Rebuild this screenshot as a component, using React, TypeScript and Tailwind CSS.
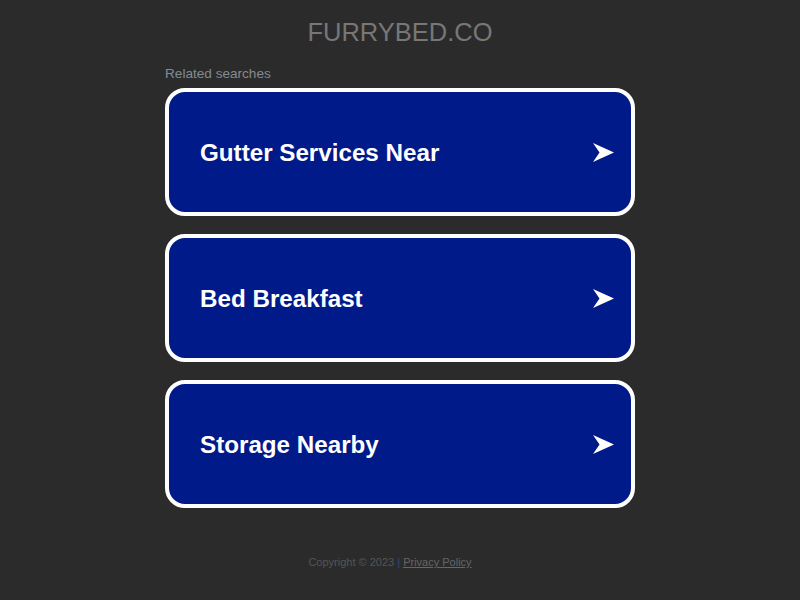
const searches = ['Gutter Services Near', 'Bed Breakfast', 'Storage Nearby'];

function Arrow() {
  return (
    <svg width="21" height="19" viewBox="0 0 21 19" className="shrink-0">
      <path d="M0 0 L21 9.5 L0 19 L6.5 9.5 Z" fill="#ffffff" />
    </svg>
  );
}

export default function App() {
  return (
    <div
      className="min-h-[600px] w-full bg-[#2b2b2b] flex flex-col items-center"
      style={{ fontFamily: '"Liberation Sans", Arial, sans-serif' }}
    >
      <h1 className="pt-[16px] text-[25.5px] leading-[32px] text-[#777777] font-normal">FURRYBED.CO</h1>

      <div className="w-[470px] mt-[16px] flex flex-col">
        <p className="text-[13.6px] leading-[20px] text-[#838b92] mb-[4px]">Related searches</p>
        <div className="flex flex-col gap-[18px]">
          {searches.map((s) => (
            <a
              key={s}
              href="#"
              className="h-[128px] rounded-[20px] border-[4px] border-white bg-[#011a8a] flex items-center justify-between pl-[31px] pr-[17px]"
            >
              <span className="text-white text-[24.2px] font-bold pt-[2px]">{s}</span>
              <Arrow />
            </a>
          ))}
        </div>
      </div>

      <p className="mt-[46px] pr-[20px] text-[11px] leading-[16px] text-[#555555]">
        Copyright © 2023 <span className="text-[#3b4779]">|</span>{' '}
        <a href="#" className="underline text-[#666666]">Privacy Policy</a>
      </p>
    </div>
  );
}
